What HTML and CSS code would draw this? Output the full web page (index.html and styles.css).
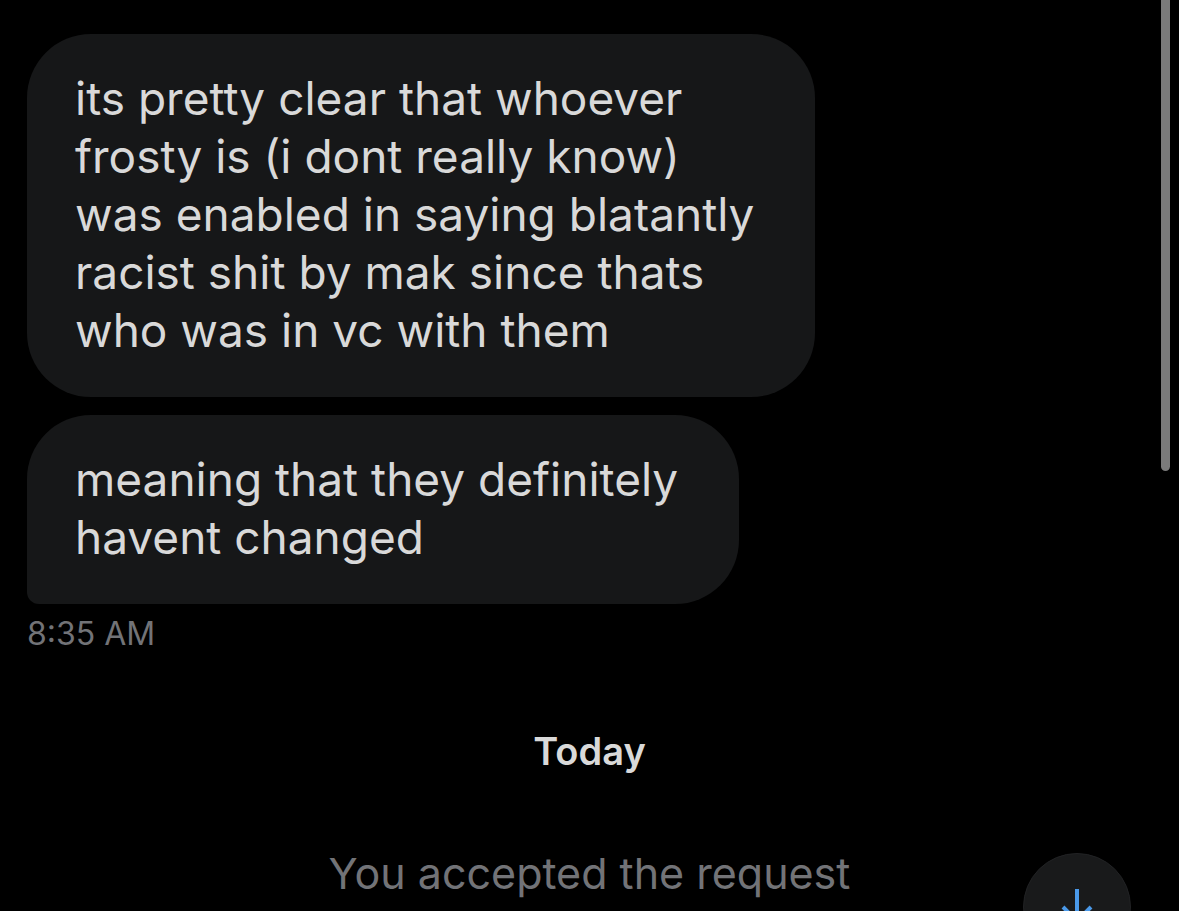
FILE: index.html
```html
<!DOCTYPE html>
<html lang="en">
<head>
    <meta charset="UTF-8">
    <meta name="viewport" content="width=device-width, initial-scale=1.0">
    <title>Messages</title>
    <link rel="stylesheet" href="styles.css">
</head>
<body>
    <main class="chat">
        <div class="message">its pretty clear that whoever<br>frosty is (i dont really know)<br>was enabled in saying blatantly<br>racist shit by mak since thats<br>who was in vc with them</div>
        <div class="message message-last">meaning that they definitely<br>havent changed</div>
        <time class="time">8:35 AM</time>
        <h2 class="day">Today</h2>
        <p class="notice">You accepted the request</p>
    </main>

    <div class="scrollbar"></div>

    <button class="scroll-down" type="button" aria-label="Scroll to latest">
        <svg width="40" height="40" viewBox="0 0 40 40" fill="none" stroke="#4a99e9" stroke-width="4">
            <path d="M20 2v33M6 20l14 14 14-14"/>
        </svg>
    </button>
</body>
</html>
```

FILE: styles.css
```css
* {
    box-sizing: border-box;
}

body {
    margin: 0;
    height: 100vh;
    overflow: hidden;
    position: relative;
    background-color: #000;
    color: #d9d9d9;
    font-family: Inter, "Liberation Sans", sans-serif;
}

.chat {
    display: flex;
    flex-direction: column;
    align-items: flex-start;
    padding: 34px 27px 0;
}

.message {
    padding: 35px 61px 38px 48px;
    margin-bottom: 18px;
    border-radius: 64px;
    background-color: #161718;
    font-size: 46px;
    line-height: 58px;
}

.message-last {
    border-bottom-left-radius: 12px;
    margin-bottom: 10px;
}

.time {
    color: #727377;
    font-size: 32px;
    line-height: 40px;
}

.day {
    align-self: center;
    margin: 73px 0 0;
    font-size: 38px;
    font-weight: 600;
    line-height: 48px;
}

.notice {
    align-self: center;
    margin: 70px 0 0;
    color: #727377;
    font-size: 43px;
    line-height: 56px;
}

.scrollbar {
    position: absolute;
    top: -10px;
    right: 9px;
    width: 9px;
    height: 481px;
    border-radius: 5px;
    background-color: #7a7a7a;
}

.scroll-down {
    position: absolute;
    right: 48px;
    bottom: -50px;
    width: 108px;
    height: 108px;
    padding: 0;
    border: 1px solid #212224;
    border-radius: 50%;
    background-color: #191a1b;
    display: flex;
    justify-content: center;
    align-items: center;
}
```
